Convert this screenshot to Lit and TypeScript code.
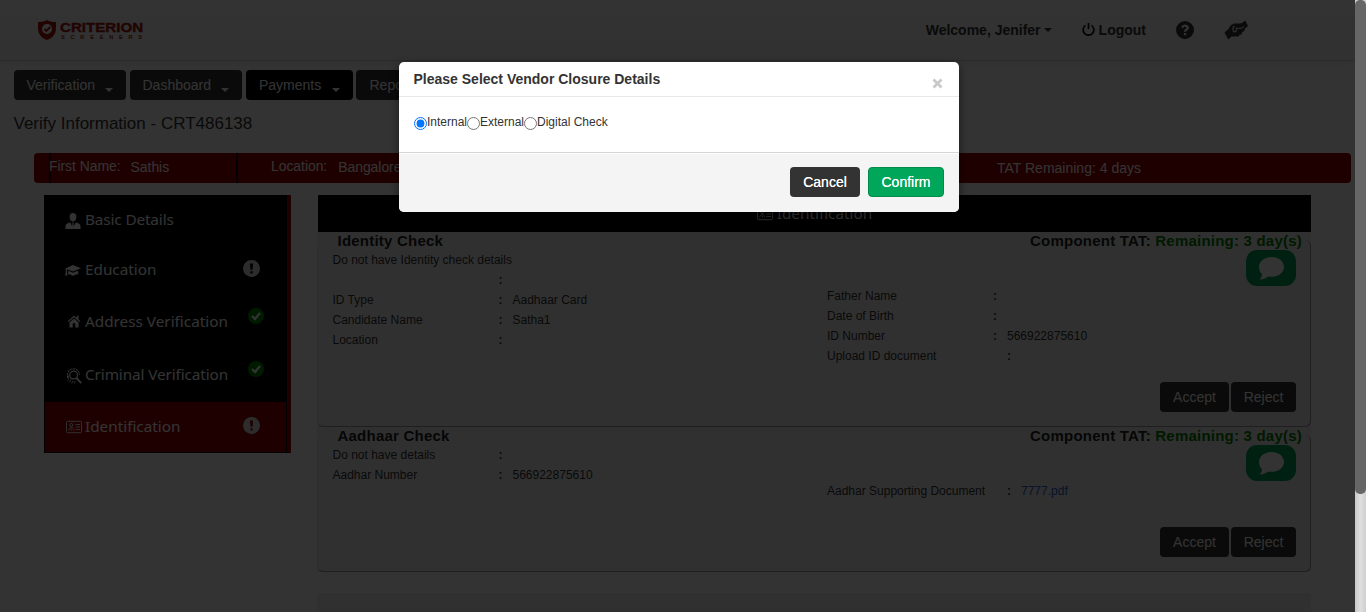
import { LitElement, html, css, svg, nothing } from "lit";
import { customElement, property, state } from "lit/decorators.js";
import { classMap } from "lit/directives/class-map.js";

const icons: Record<string, unknown> = {
  user: svg`<path d="M8 0c2.200 0 3.400 1.500 3.400 3.700 0 2.300-1.300 4.800-3.400 4.800S4.600 6 4.600 3.700C4.600 1.500 5.800 0 8 0z"/><path d="M5.300 9.500 8 15l2.700-5.500c3 .8 4.800 1.500 4.800 3.500v3H.5v-3c0-2 1.800-2.700 4.800-3.500zM7.200 9.500h1.600l-.3 1.500.5 2.200-1 1.300-1-1.300.5-2.200z"/>`,
  grad: svg`<path d="M8 3 16 6.300 8 9.600 2 7.200v3.300l.5 3H0l.7-3V6.300z"/><path d="M3.300 8.700 8 10.700l4.900-2 .6 3.500C11.500 12.200 9.500 12.800 8 14c-1.500-1.200-3-1.800-5-1.800z"/>`,
  home: svg`<path d="M8 1 .8 7.600l1 1.100L8 3.200l6.200 5.500 1-1.100-2-1.800V1.500h-2v2.400zM8 4.600 2.800 9.200v5.600h3.700V10h3v4.800h3.700V9.200z"/>`,
  finger: svg`<g fill="none" stroke="currentColor"><circle cx="7.600" cy="7" r="3.900" stroke-width="1.200"/><path d="m10.400 10 4.800 5.200" stroke-width="1.900"/><path d="M1.500 10C.8 4 3.500.8 7.300.8s6.300 2.700 6 6.200M1.700 12.500c.8-1.500.7-3 .7-5M3.500 14.300c.8-1.300 1-2.600 1-3.800M5.700 15.500c.6-1 .9-2 .9-3M8.400 15.500c.5-1 .6-1.800.5-2.800" stroke-dasharray="2.500 .5"/></g>`,
  card: svg`<g fill="none" stroke="currentColor" stroke-width=".9"><rect x=".5" y="2.300" width="15" height="11.400" rx="1.300"/><path d="M9.500 5.500H14M9.500 8H14M9.500 10.500H14"/><circle cx="5.300" cy="6" r="1.500"/><path d="M2.700 11.500c.3-2 1.300-3.200 2.600-3.200s2.300 1.200 2.600 3.200M5.300 9.500v2"/></g>`,
  warn: svg`<path fill-rule="evenodd" d="M8 0a8 8 0 1 1 0 16A8 8 0 0 1 8 0zM6.600 3.200 7 9.200h2l.4-6zM7 10.500v2.200h2.100v-2.200z"/>`,
  help: svg`<path fill-rule="evenodd" d="M8 0a8 8 0 1 1 0 16A8 8 0 0 1 8 0zM4.600 5.600l1.900.9C6.900 5.600 7.300 5.200 8 5.200c.7 0 1.200.4 1.200.9 0 1.200-2.200 1.200-2.200 3.500h2c0-1.400 2.500-1.500 2.500-3.700C11.500 4.200 10 3 8.100 3 6.500 3 5.300 3.900 4.600 5.600zM7 10.600v2.100h2.100v-2.100z"/>`,
  power: svg`<g fill="none" stroke="currentColor" stroke-width="2.100"><path d="M4.300 2.900a6.600 6.600 0 1 0 7.400 0"/><path d="M8 0v7.500"/></g>`,
  chat: svg`<path d="M8 .7c4.400 0 8 2.700 8 6.300s-3.600 6.300-8 6.300c-.8 0-1.500 0-2.200-.2C4.500 14.200 2.600 15.100.4 15c1-1 1.500-2 1.500-3.300C.7 10.500 0 8.900 0 7 0 3.400 3.600.7 8 .7z"/>`,
};

const icon = (name: string, cls = "") =>
  html`<svg class="icon ${cls}" viewBox="0 0 16 16" fill="currentColor" aria-hidden="true">${icons[name]}</svg>`;

const shared = css`
  * { box-sizing: border-box; }
  .icon { display: block; flex: none; width: 16px; height: 16px; }
  button { font: 14px/20px "Liberation Sans", Arial, sans-serif; border: 0; border-radius: 4px;
    background: #333; color: #fff; height: 30px; padding: 0; }
`;

@customElement("top-header")
export class TopHeader extends LitElement {
  static styles = [shared, css`
    :host { display: flex; height: 61px; width: 1355px; align-items: center; padding: 0 107px 1px 38px;
      background: linear-gradient(#fff, #f2f2f2); border-bottom: 1px solid #d4d4d4;
      box-shadow: 0 1px 8px rgba(0,0,0,.08); color: #333; font-weight: bold; }
    .logo { display: flex; gap: 4px; color: #a5160e; align-items: center; margin-right: auto; }
    .shield { width: 18px; height: 20px; }
    .words { display: flex; flex-direction: column; padding-top: 2px; }
    .name { font: bold 13.500px/13px "Liberation Sans", Arial, sans-serif; transform: scaleX(1.12); transform-origin: left; -webkit-text-stroke: .4px; }
    .sub { font: 5.500px/7px "Liberation Sans", Arial, sans-serif; letter-spacing: 5.850px; padding-left: 1px; white-space: nowrap; width: 84px; -webkit-text-stroke: .2px; }
    .caret { border: 4.500px solid transparent; border-top-color: currentColor; border-bottom: 0; margin-left: 3px; }
    .item { display: flex; align-items: center; }
    .user { margin-right: 30px; }
    .out { gap: 4px; margin-right: 30px; }
    .power { width: 13px; height: 13px; color: #111; }
    .help { width: 18px; height: 18px; margin-right: 30px; }
    .hands { width: 24px; height: 20px; }
  `];
  render() {
    return html`
      <div class="logo">
        <svg class="shield" viewBox="0 0 18 20" aria-hidden="true">
          <path fill="currentColor" d="M9 0c2.500 1.500 5.500 2 9 2v6c0 6-3.500 10-9 12C3.500 18 0 14 0 8V2c3.500 0 6.500-.5 9-2z"/>
          <circle cx="9" cy="9" r="5" fill="#fff"/>
          <path fill="none" stroke="currentColor" stroke-width="1.800" d="m6.300 9 2 2 4-4"/>
        </svg>
        <div class="words"><span class="name">CRITERION</span><span class="sub">SCREENERS</span></div>
      </div>
      <div class="item user">Welcome, Jenifer<i class="caret"></i></div>
      <div class="item out">${icon("power", "power")}Logout</div>
      ${icon("help", "help")}
      <svg class="hands" viewBox="0 0 24 20" aria-hidden="true">
        <path fill="currentColor" d="M.5 12.500 4.500 9 6.500 5.500 10 3.500h5.500L18 3l3.300-2.500L24 6l-3 2.500-.8 2.800-2 .7-.5 2.200-2 .5-1 1.800H7.500L4.300 19.500z"/>
        <path fill="none" stroke="#f7f7f7" stroke-width="1.100" d="M10.500 6 9 7.500v3.200c.5 1.600 2.800 1.600 3.300 0V8.300h4.200c1.800 0 2.500-.8 3.300-1.800"/>
      </svg>`;
  }
}

@customElement("detail-card")
export class DetailCard extends LitElement {
  @property() heading = "";
  @property({ attribute: false }) left: string[][] = [];
  @property({ attribute: false }) right: string[][] = [];
  static styles = [shared, css`
    :host { display: flex; flex-direction: column; width: 994px; background: #f0f0f0; color: #333; }
    .head { display: flex; justify-content: space-between; height: 18px; margin-bottom: -10px; padding: 0 9px 0 20.500px;
      font: bold 15px/18px "Liberation Sans", Arial, sans-serif; letter-spacing: .22px; color: #222; }
    .ok { color: #008000; }
    .frame { flex: 1; display: grid; grid-template-columns: 494.500px 469px; padding: 10px 14px 0 14.500px;
      border: solid #999; border-width: 0 1px 1px 0; border-left: 1px solid #e6e6e6; border-radius: 6px; }
    .row { display: grid; grid-template-columns: 166px 14px 1fr; height: 20px; font-size: 12px; line-height: 20px; white-space: nowrap; }
    .row.wide { grid-template-columns: 180px 14px 1fr; }
    .rcol { display: flex; flex-direction: column; }
    .chat { align-self: flex-end; width: 50px; height: 36px; border-radius: 11px; background: #00a65a; color: #fff;
      display: flex; align-items: center; justify-content: center; }
    .bubble { width: 25px; height: 25px; }
    .acts { display: flex; gap: 2px; justify-content: flex-end; margin-top: auto; padding-bottom: 14px; }
    .accept { width: 69px; }
    .reject { width: 65px; }
    .link { color: #2a5fd0; }
  `];
  private row(r: string[]) {
    return html`<div class=${classMap({ row: true, wide: r[2] === "wide" })}>
      <span>${r[0]}</span><b>${r.length > 1 ? ":" : nothing}</b><span class=${r[1]?.endsWith(".pdf") ? "link" : ""}>${r[1]}</span></div>`;
  }
  render() {
    return html`
      <div class="head"><span>${this.heading}</span><span>Component TAT: <span class="ok">Remaining: 3 day(s)</span></span></div>
      <div class="frame">
        <div>${this.left.map((r) => this.row(r))}</div>
        <div class="rcol">
          <div class="chat">${icon("chat", "bubble")}</div>
          ${this.right.map((r) => this.row(r))}
          <div class="acts"><button class="accept">Accept</button><button class="reject">Reject</button></div>
        </div>
      </div>`;
  }
}

@customElement("closure-dialog")
export class ClosureDialog extends LitElement {
  @state() private choice = "Internal";
  static styles = [shared, css`
    :host { display: block; width: 560px; height: 150px; background: #fff; border-radius: 5px; overflow: hidden;
      box-shadow: 0 3px 9px rgba(0,0,0,.5); color: #333; font: 12px/20px "Liberation Sans", Arial, sans-serif; }
    .head { display: flex; justify-content: space-between; height: 35px; padding: 7px 15px 0 14.500px; border-bottom: 1px solid #e9e9e9;
      font: bold 14px/20px "Liberation Sans", Arial, sans-serif; }
    .close { width: 11px; height: 11px; margin: 9px 1px 0 0; }
    .body { display: flex; height: 55px; padding: 15px 15px 0; line-height: 20px; }
    .opt { display: flex; height: 20px; }
    .opt input { margin: 5px 0 0; width: 13px; height: 13px; }
    .opt.w1 { width: 53px; }
    .opt.w2 { width: 57px; }
    .foot { display: flex; justify-content: flex-end; gap: 8px; height: 60px; padding: 14px 15px 0; background: #f4f4f4; border-top: 1px solid #d6d6d6; box-shadow: inset 0 1px #fff; }
    .foot button { text-shadow: 0 0 .5px #fff; }
    .cancel { width: 70px; }
    .confirm { width: 76px; background: #00a65a; border: 1px solid #008d4c; }
  `];
  render() {
    return html`
      <div class="head">Please Select Vendor Closure Details
        <svg class="close" viewBox="0 0 11 11" aria-hidden="true"><path stroke="#c8c8c8" stroke-width="2.700" d="m1.500 1.500 8 8m0-8-8 8"/></svg></div>
      <div class="body">
        ${["Internal", "External", "Digital Check"].map((o, i) => html`<label class="opt w${i + 1}">
          <input type="radio" name="c" .checked=${this.choice === o} @change=${() => (this.choice = o)}>${o}</label>`)}
      </div>
      <div class="foot"><button class="cancel">Cancel</button><button class="confirm">Confirm</button></div>`;
  }
}

@customElement("app-root")
export class AppRoot extends LitElement {
  static styles = [shared, css`
    :host { display: block; position: relative; width: 1366px; height: 612px; overflow: hidden; background: #fff;
      font: 14px/20px "Liberation Sans", Arial, sans-serif; color: #333; }
    .nav { display: flex; gap: 4px; padding: 9px 14px 0; }
    .nav button { display: flex; justify-content: space-between; padding: 5px 13px 0 12.500px; width: 112px; }
    .nav .pay { width: 107px; background: #000; padding-left: 13px; margin-right: -1px; }
    .nav button:last-child { padding-left: 13.500px; }
    .nav .tri { border: 4px solid transparent; border-top-color: #fff; border-bottom: 0; margin-top: 13px; }
    h1 { margin: 13px 0 0 13.500px; font: 17px/22px "Liberation Sans", Arial, sans-serif; height: 22px; }
    .strip { display: flex; width: 1317px; height: 30px; margin: 18px 0 0 34px; background: #9b0000; color: #fff; border-radius: 4px; line-height: 27px; overflow: hidden; white-space: nowrap; }
    .pad { width: 17px; border-right: 2px solid #200; }
    .cell { display: flex; gap: 10px; margin-left: -2px; width: 189px; border-right: 2px solid #100; }
    .cell span + span, .loc span + span { padding-top: 1px; }
    .cell, .loc { letter-spacing: -.07px; }
    .loc { display: flex; gap: 11px; padding-left: 33px; width: 759px; }
    .tat { line-height: 31px; }
    .main { display: flex; padding: 12px 0 0 44px; align-items: flex-start; }
    .side { width: 247px; height: 258px; background: #000; border-right: 4px solid #9b0000; border-bottom: 1px solid #000;
      color: #fff; font: 15.300px/24px "Noto Sans", sans-serif; display: flex; flex-direction: column; margin-right: 26px; padding: 0 1px; }
    .tab { display: grid; grid-template-columns: 20px 158px 18px; padding-left: 20px; border-bottom: 1px solid #120000; align-items: start; }
    .tab .lead { margin-top: 17px; }
    .label { margin-top: 12px; white-space: nowrap; }
    .t0 { height: 50px; letter-spacing: -.12px; }
    .t1 { height: 51px; }
    .t2 { height: 53px; }
    .t3 { height: 53px; border-bottom: 0; letter-spacing: -.1px; }
    .t4 { height: 50px; background: #9b0000; border-bottom: 0; }
    .t2 .label, .t3 .label { margin-top: 13px; }
    .t2 .lead { margin: 18px 0 0 2px; width: 14px; height: 15px; }
    .t3 .lead { margin-left: 1px; margin-top: 19px; }
    .t4 .lead { margin-left: 1px; }
    .t0 .lead { margin-top: 18px; }
    .badge { width: 17px; height: 17px; color: #ddd; margin: 15px 0 0 0; }
    .done { width: 16px; height: 16px; margin: 12px 0 0 5px; }
    .panel { width: 994px; }
    .bar { height: 37px; background: #000; color: #fff; display: flex; justify-content: center; gap: 4px; font: 15.300px/37px "Noto Sans", sans-serif; margin-left: 1px; }
    .bar .icon { margin-top: 11px; }
    .c1 { height: 195px; }
    .c2 { height: 145px; }
    .next { margin-top: 21px; height: 40px; background: #f0f0f0; border: 1px solid #e8e8e8; border-radius: 4px; }
    .shade { position: absolute; inset: 0 11px 0 0; background: rgba(0,0,0,.8); z-index: 5; }
    closure-dialog { position: absolute; left: 399px; top: 62px; z-index: 6; }
    .scroll { position: absolute; right: 0; top: 0; width: 11px; height: 612px; background: linear-gradient(90deg, #c9c9c9, #dedede 50%, #cfcfcf); }
    .thumb { height: 494px; border-radius: 5px; background: #666; }
  `];

  private tabs = [
    ["user", "Basic Details", ""],
    ["grad", "Education", "warn"],
    ["home", "Address Verification", "done"],
    ["finger", "Criminal Verification", "done"],
    ["card", "Identification", "warn"],
  ];

  private status(kind: string) {
    if (kind === "warn") return icon("warn", "badge");
    if (kind === "done") return html`<svg class="done" viewBox="0 0 16 16" aria-hidden="true">
      <circle cx="8" cy="8" r="8" fill="#008000"/><path d="m4 8 3 3 5-6" fill="none" stroke="#fff" stroke-width="2.200"/></svg>`;
    return nothing;
  }

  render() {
    return html`
      <top-header></top-header>
      <div class="nav">
        ${["Verification", "Dashboard", "Payments", "Reports"].map((n) => html`<button class=${n === "Payments" ? "pay" : ""}>${n}<i class="tri"></i></button>`)}
      </div>
      <h1>Verify Information - CRT486138</h1>
      <div class="strip">
        <div class="pad"></div>
        <div class="cell"><span>First Name:</span><span>Sathis</span></div>
        <div class="loc"><span>Location:</span><span>Bangalore</span></div>
        <div class="tat">TAT Remaining: 4 days</div>
      </div>
      <div class="main">
        <div class="side">${this.tabs.map(([ic, label, st], i) => html`<div class="tab t${i}">${icon(ic, "lead")}<span class="label">${label}</span>${this.status(st)}</div>`)}</div>
        <div class="panel">
          <div class="bar">${icon("card")}Identification</div>
          <detail-card class="c1" heading="Identity Check"
            .left=${[["Do not have Identity check details"], ["", ""], ["ID Type", "Aadhaar Card"], ["Candidate Name", "Satha1"], ["Location", ""]]}
            .right=${[["Father Name", ""], ["Date of Birth", ""], ["ID Number", "566922875610"], ["Upload ID document", "", "wide"]]}></detail-card>
          <detail-card class="c2" heading="Aadhaar Check"
            .left=${[["Do not have details", ""], ["Aadhar Number", "566922875610"]]}
            .right=${[["Aadhar Supporting Document", "7777.pdf", "wide"]]}></detail-card>
          <div class="next"></div>
        </div>
      </div>
      <div class="shade"></div>
      <closure-dialog></closure-dialog>
      <div class="scroll"><div class="thumb"></div></div>`;
  }
}
